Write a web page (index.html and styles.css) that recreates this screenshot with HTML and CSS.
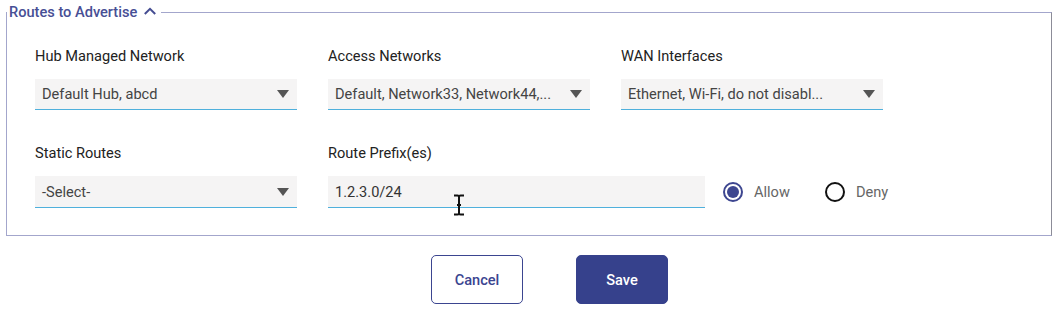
FILE: index.html
```html
<!DOCTYPE html>
<html lang="en">
<head>
<meta charset="utf-8">
<title>Routes to Advertise</title>
<link rel="stylesheet" href="styles.css">
</head>
<body>
<div class="page">
  <fieldset class="group">
    <legend class="group-title">Routes to Advertise
      <svg class="chev" width="12" height="8" viewBox="0 0 12 8"><path d="M0.8 7 L6 1.8 L11.2 7" fill="none" stroke="#454d92" stroke-width="2"/></svg>
    </legend>
    <div class="inner">
      <div class="row">
        <div class="field">
          <div class="label">Hub Managed Network</div>
          <div class="select"><span>Default Hub, abcd</span><i class="caret"></i></div>
        </div>
        <div class="field">
          <div class="label">Access Networks</div>
          <div class="select"><span>Default, Network33, Network44,...</span><i class="caret"></i></div>
        </div>
        <div class="field">
          <div class="label">WAN Interfaces</div>
          <div class="select"><span>Ethernet, Wi-Fi, do not disabl...</span><i class="caret"></i></div>
        </div>
      </div>
      <div class="row row2">
        <div class="field">
          <div class="label">Static Routes</div>
          <div class="select"><span>-Select-</span><i class="caret"></i></div>
        </div>
        <div class="field wide">
          <div class="label">Route Prefix(es)</div>
          <div class="select input"><span>1.2.3.0/24</span>
            <svg class="ibeam" width="12" height="22" viewBox="0 0 12 22"><path d="M1 1.5 H4.5 Q6 1.5 6 3 V19 Q6 20.5 4.5 20.5 H1 M11 1.5 H7.5 Q6 1.5 6 3 M6 19 Q6 20.5 7.5 20.5 H11 M4 11 H8" fill="none" stroke="#111" stroke-width="2"/></svg>
          </div>
        </div>
        <div class="radios">
          <label class="radio"><span class="dot on"></span>Allow</label>
          <label class="radio"><span class="dot"></span>Deny</label>
        </div>
      </div>
    </div>
  </fieldset>
  <div class="actions">
    <button class="btn btn-outline">Cancel</button>
    <button class="btn btn-primary">Save</button>
  </div>
</div>
</body>
</html>
```
FILE: styles.css
```css
html, body {
  margin: 0;
  padding: 0;
  background: #fff;
  font-family: Roboto, "Liberation Sans", sans-serif;
}
.page {
  padding: 4px 5px 0 6px;
}
.group {
  margin: 0;
  padding: 0;
  border: 1px solid #a3a6cc;
  border-right-color: #8c8c98;
  min-width: 0;
}
.group-title {
  padding: 0 5px 0 2px;
  font-size: 14.6px;
  line-height: 16px;
  font-weight: 500;
  color: #474f95;
  display: flex;
  align-items: center;
}
.chev {
  margin-left: 7px;
  margin-top: -2px;
}
.inner {
  padding: 28px 0 27px 28px;
  display: flex;
  flex-direction: column;
  gap: 35px;
}
.row {
  display: flex;
  gap: 31px;
  align-items: flex-end;
}
.field {
  width: 262px;
  display: flex;
  flex-direction: column;
}
.field.wide {
  width: 377px;
}
.label {
  font-size: 14.6px;
  line-height: 16px;
  color: #222;
  margin-bottom: 15px;
}
.select {
  position: relative;
  height: 30px;
  background: #f5f4f4;
  border-bottom: 1px solid #4fb0dc;
  display: flex;
  align-items: center;
  justify-content: space-between;
  padding: 0 8px 0 7px;
  font-size: 14.6px;
  color: #444;
}
.row2 .select {
  height: 31px;
}
.input span {
  color: #333;
}
.caret {
  width: 0;
  height: 0;
  border-left: 6px solid transparent;
  border-right: 6px solid transparent;
  border-top: 8px solid #555;
}
.ibeam {
  position: absolute;
  left: 125px;
  top: 18px;
}
.radios {
  display: flex;
  align-items: center;
  gap: 35px;
  height: 32px;
  margin-left: -13px;
}
.radio {
  display: flex;
  align-items: center;
  gap: 11px;
  font-size: 14.6px;
  color: #666;
}
.dot {
  width: 20px;
  height: 20px;
  box-sizing: border-box;
  border-radius: 50%;
  border: 2px solid #111;
  display: flex;
  align-items: center;
  justify-content: center;
}
.dot.on {
  border-color: #3d4690;
}
.dot.on::after {
  content: "";
  width: 12px;
  height: 12px;
  border-radius: 50%;
  background: #3d4690;
}
.actions {
  display: flex;
  justify-content: center;
  gap: 53px;
  margin-top: 19px;
  padding-left: 41px;
}
.btn {
  width: 92px;
  height: 49px;
  border-radius: 5px;
  font-family: Roboto, "Liberation Sans", sans-serif;
  font-size: 14.6px;
  font-weight: 500;
  cursor: pointer;
}
.btn-outline {
  background: #fff;
  border: 1.5px solid #3b4590;
  color: #3b4590;
}
.btn-primary {
  background: #36418c;
  border: 1px solid #36418c;
  color: #fff;
}
```
